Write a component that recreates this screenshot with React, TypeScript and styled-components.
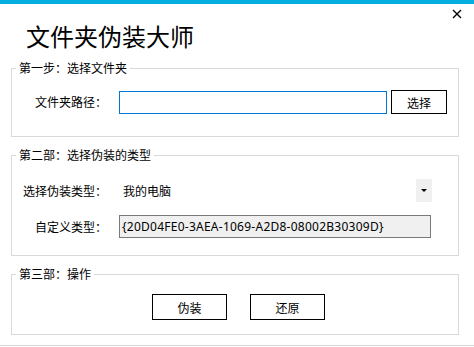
import React from 'react';
import styled, { createGlobalStyle } from 'styled-components';

const GlobalStyle = createGlobalStyle`
  html, body {
    margin: 0;
    padding: 0;
    background: #ffffff;
  }
  body {
    font-family: "Noto Sans CJK SC", "Noto Sans", sans-serif;
    color: #000000;
  }
`;

const Window = styled.div`
  position: relative;
  width: 474px;
  height: 347px;
  box-sizing: border-box;
  background: #ffffff;
  border-top: 4px solid #05aee0;
  display: flex;
  flex-direction: column;
`;

const Header = styled.header`
  height: 57px;
  box-sizing: border-box;
  padding: 20px 0 0 26px;
`;

const Title = styled.h1`
  margin: 0;
  font-size: 24px;
  line-height: 24px;
  font-weight: 400;
`;

const CloseButton = styled.button`
  position: absolute;
  top: 4px;
  right: 12px;
  width: 11px;
  height: 11px;
  padding: 0;
  border: 0;
  background: transparent;
  display: flex;
  align-items: center;
  justify-content: center;
`;

const Content = styled.main`
  display: flex;
  flex-direction: column;
  gap: 11px;
  padding: 0 15px 0 11px;
  flex: 1;
`;

const Group = styled.fieldset<{ $pt: number; $pb: number }>`
  margin: 0;
  min-width: 0;
  border: 1px solid #d9d9d9;
  padding: ${(p) => p.$pt}px 0 ${(p) => p.$pb}px 0;
  display: flex;
  flex-direction: column;
  gap: 13px;
`;

const Legend = styled.legend`
  margin-left: 4px;
  padding: 0 3px;
  font-size: 12px;
  line-height: 14px;
`;

const Row = styled.div`
  display: flex;
  align-items: center;
`;

const Label = styled.span`
  width: 95px;
  margin-right: 12px;
  text-align: right;
  font-size: 12px;
  line-height: 16px;
  white-space: nowrap;
`;

const TextInput = styled.input<{ $readOnlyLook?: boolean; $width: number }>`
  box-sizing: border-box;
  width: ${(p) => p.$width}px;
  height: 23px;
  margin: 0;
  padding: 0 2px;
  font-family: "Noto Sans", "Noto Sans CJK SC", sans-serif;
  font-size: 12px;
  letter-spacing: 0.25px;
  color: #000;
  outline: none;
  border: 1px solid ${(p) => (p.$readOnlyLook ? '#7a7a7a' : '#0078d7')};
  background: ${(p) => (p.$readOnlyLook ? '#f0f0f0' : '#ffffff')};
`;

const Button = styled.button<{ $w: number; $h: number }>`
  box-sizing: border-box;
  width: ${(p) => p.$w}px;
  height: ${(p) => p.$h}px;
  margin: 0;
  padding: 0;
  border: 1px solid #000000;
  background: #ffffff;
  font-family: "Noto Sans CJK SC", sans-serif;
  font-size: 12px;
  color: #000;
`;

const PickButton = styled(Button)`
  margin-left: 4px;
`;

const Combo = styled.div`
  width: 313px;
  height: 23px;
  display: flex;
  align-items: center;
  justify-content: space-between;
`;

const ComboText = styled.span`
  padding-left: 4px;
  font-size: 12px;
  line-height: 16px;
`;

const ComboArrow = styled.span`
  width: 16px;
  height: 23px;
  background: #f0f0f0;
  display: flex;
  align-items: center;
  justify-content: center;

  &::after {
    content: '';
    width: 0;
    height: 0;
    border-left: 3px solid transparent;
    border-right: 3px solid transparent;
    border-top: 3px solid #000;
  }
`;

const Actions = styled.div`
  display: flex;
  gap: 23px;
  padding-left: 140px;
`;

const Footer = styled.div`
  height: 1px;
  background: #d4d4d4;
  margin-bottom: 1px;
`;

export default function App() {
  return (
    <>
      <GlobalStyle />
      <Window>
        <Header>
          <Title>文件夹伪装大师</Title>
        </Header>
        <CloseButton aria-label="关闭">
          <svg width="10" height="10" viewBox="0 0 10 10">
            <path d="M1 1 L9 9 M9 1 L1 9" stroke="#000" strokeWidth="1.4" />
          </svg>
        </CloseButton>
        <Content>
          <Group $pt={15} $pb={22}>
            <Legend>第一步：选择文件夹</Legend>
            <Row>
              <Label>文件夹路径：</Label>
              <TextInput $width={268} defaultValue="" />
              <PickButton $w={56} $h={24}>选择</PickButton>
            </Row>
          </Group>
          <Group $pt={17} $pb={17}>
            <Legend>第二部：选择伪装的类型</Legend>
            <Row>
              <Label>选择伪装类型：</Label>
              <Combo>
                <ComboText>我的电脑</ComboText>
                <ComboArrow />
              </Combo>
            </Row>
            <Row>
              <Label>自定义类型：</Label>
              <TextInput
                $width={312}
                $readOnlyLook
                readOnly
                defaultValue="{20D04FE0-3AEA-1069-A2D8-08002B30309D}"
              />
            </Row>
          </Group>
          <Group $pt={13} $pb={14}>
            <Legend>第三部：操作</Legend>
            <Actions>
              <Button $w={75} $h={26}>伪装</Button>
              <Button $w={75} $h={26}>还原</Button>
            </Actions>
          </Group>
        </Content>
        <Footer />
      </Window>
    </>
  );
}
